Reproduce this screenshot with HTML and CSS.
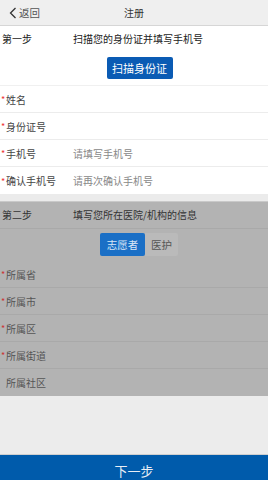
FILE: index.html
```
<!DOCTYPE html>
<html lang="zh">
<head>
<meta charset="utf-8">
<link rel="stylesheet" href="styles.css">
</head>
<body>
<div class="page">
  <header class="topbar">
    <div class="back">
      <svg class="chev" width="8" height="12" viewBox="0 0 8 12"><polyline points="6.5,1 1.5,6 6.5,11" fill="none" stroke="#333" stroke-width="1.3"/></svg>
      <span>返回</span>
    </div>
    <div class="title">注册</div>
  </header>

  <section class="card">
    <div class="step">
      <span class="step-no">第一步</span>
      <span class="step-title">扫描您的身份证并填写手机号</span>
    </div>
    <div class="scan-wrap"><button class="scan">扫描身份证</button></div>
    <div class="row"><span class="req">*</span><span class="label">姓名</span></div>
    <div class="row"><span class="req">*</span><span class="label">身份证号</span></div>
    <div class="row"><span class="req">*</span><span class="label">手机号</span><span class="ph">请填写手机号</span></div>
    <div class="row"><span class="req">*</span><span class="label">确认手机号</span><span class="ph">请再次确认手机号</span></div>
  </section>

  <div class="gap"></div>

  <section class="card dim">
    <div class="step">
      <span class="step-no">第二步</span>
      <span class="step-title">填写您所在医院/机构的信息</span>
    </div>
    <div class="toggle-wrap">
      <div class="toggle"><span class="opt active">志愿者</span><span class="opt">医护</span></div>
    </div>
    <div class="row"><span class="req">*</span><span class="label">所属省</span></div>
    <div class="row"><span class="req">*</span><span class="label">所属市</span></div>
    <div class="row"><span class="req">*</span><span class="label">所属区</span></div>
    <div class="row"><span class="req">*</span><span class="label">所属街道</span></div>
    <div class="row nob"><span class="req blank"></span><span class="label">所属社区</span></div>
  </section>

  <div class="fill"></div>
  <footer class="next">下一步</footer>
</div>
</body>
</html>
```
FILE: styles.css
```
* { box-sizing: border-box; }
html, body { margin: 0; padding: 0; }
body {
  font-family: "Noto Sans CJK SC", "Noto Sans", sans-serif;
  font-size: 10px;
  color: #333;
  background: #ececec;
}
.page {
  height: 480px;
  display: flex;
  flex-direction: column;
  overflow: hidden;
}
.topbar {
  height: 26px;
  flex: none;
  background: #efefef;
  border-bottom: 1px solid #d6d6d6;
  display: flex;
  align-items: center;
  position: relative;
}
.back {
  display: flex;
  align-items: center;
  gap: 2px;
  padding-left: 9px;
  color: #555;
  font-size: 10.5px;
}
.title {
  position: absolute;
  left: 0; right: 0;
  text-align: center;
  color: #333;
  pointer-events: none;
}
.card { background: #fff; flex: none; }
.step {
  height: 25px;
  display: flex;
  align-items: center;
  padding-left: 2px;
  color: #222;
}
.step-no { width: 71px; }
.scan-wrap {
  height: 35px;
  display: flex;
  justify-content: center;
  align-items: flex-start;
  padding-top: 6px;
  border-bottom: 1px solid #f0f0f0;
}
.scan {
  font-family: inherit;
  font-size: 11px;
  color: #fff;
  background: #0a5bb4;
  border: none;
  border-radius: 2px;
  height: 22px;
  width: 66px;
  padding: 0;
  margin-left: 11px;
}
.row {
  height: 27px;
  display: flex;
  align-items: center;
  border-bottom: 1px solid #ececec;
}
.row:last-child { border-bottom: none; }
.req {
  width: 6px;
  color: #e33;
  font-size: 9px;
  text-align: center;
  padding-top: 1px;
}
.label { width: 67px; color: #444; }
.ph { color: #888; }
.gap { height: 8px; background: #ebebeb; flex: none; border-bottom: 1px solid #c9c9c9; }
.dim { background: #b3b3b3; }
.dim .step { height: 27px; border-bottom: 1px solid #a9a9a9; color: #333; padding-bottom: 2px; }
.dim .row { border-bottom-color: #a9a9a9; height: 27px; }
.dim .row.nob { border-bottom: none; }
.dim .label { color: #555; }
.dim .req { color: #c33; }
.toggle-wrap {
  height: 32px;
  display: flex;
  justify-content: center;
  padding-top: 4px;
}
.toggle { display: flex; height: 23px; margin-left: 10px; }
.opt {
  display: flex;
  align-items: center;
  justify-content: center;
  padding: 0 6px;
  background: #bababa;
  color: #555;
  font-size: 10.5px;
  border-radius: 0 2px 2px 0;
}
.opt.active {
  background: #1a6fc6;
  color: #d8e6f6;
  width: 45px;
  border-radius: 2px;
}
.fill { flex: 1; background: #ececec; border-bottom: 1px solid #cfcfcf; }
.next {
  flex: none;
  height: 25px;
  line-height: 32px;
  overflow: hidden;
  background: #005bab;
  color: #e8eef6;
  text-align: center;
  font-size: 13px;
}
```
